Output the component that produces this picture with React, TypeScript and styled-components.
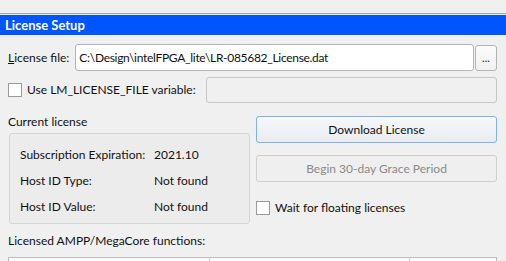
import styled, { createGlobalStyle } from 'styled-components';

const GlobalStyle = createGlobalStyle`
  html, body {
    margin: 0;
    padding: 0;
    background: #f0f0f0;
  }
  body {
    font-family: Lato, "Noto Sans", sans-serif;
    font-size: 12px;
    color: #111;
    overflow: hidden;
  }
`;

const Page = styled.div`
  width: 506px;
  height: 261px;
  padding-top: 13px;
  box-sizing: border-box;
  overflow: hidden;
`;

const Rule = styled.div`
  height: 1px;
  background: #a4a4a4;
`;

const TitleBar = styled.div`
  margin-top: 1px;
  height: 20px;
  background: #0055ff;
  color: #fff;
  font-weight: bold;
  font-size: 13px;
  line-height: 20px;
  padding-left: 5px;
`;

const Body = styled.div`
  padding: 9px 9px 0 8px;
`;

const Row = styled.div<{ $mt?: number }>`
  display: flex;
  align-items: center;
  margin-top: ${(p) => p.$mt ?? 0}px;
`;

const Label = styled.label`
  flex: none;
  white-space: nowrap;
  line-height: 16px;
`;

const Input = styled.div<{ $disabled?: boolean }>`
  box-sizing: border-box;
  height: ${(p) => (p.$disabled ? 26 : 27)}px;
  border: 1px solid ${(p) => (p.$disabled ? '#c6c6c6' : '#b4b4b4')};
  border-radius: 3px;
  background: ${(p) => (p.$disabled ? '#f0f0f0' : '#ffffff')};
  padding-left: 3px;
  line-height: 25px;
  white-space: nowrap;
  overflow: hidden;
`;

const FileInput = styled(Input)`
  flex: 1;
  margin-left: 6px;
  letter-spacing: -0.3px;
`;

const VarInput = styled(Input)`
  width: 291px;
  margin-left: auto;
`;

const Browse = styled.button`
  box-sizing: border-box;
  width: 22px;
  height: 26px;
  margin-left: 1px;
  padding: 0 0 7px;
  border: 1px solid #b4b4b4;
  border-radius: 3px;
  background: linear-gradient(#fbfbfb, #f1f1f1);
  font: inherit;
  font-size: 11px;
  line-height: 1;
  color: #222;
  display: flex;
  align-items: flex-end;
  justify-content: center;
`;

const Check = styled.span`
  display: inline-block;
  box-sizing: border-box;
  width: 14px;
  height: 14px;
  border: 1px solid #9a9a9a;
  background: #fff;
  margin-right: 5px;
  flex: none;
`;

const Columns = styled.div`
  display: grid;
  grid-template-columns: 242px 241px;
  column-gap: 6px;
  margin-top: 11px;
`;

const Column = styled.div`
  display: flex;
  flex-direction: column;
`;

const Caption = styled.div`
  line-height: 16px;
`;

const Group = styled.div`
  margin-top: 3px;
  margin-left: 1px;
  box-sizing: border-box;
  height: 91px;
  border: 1px solid #d4d4d4;
  border-radius: 3px;
  background: #ececec;
  padding: 7px 0 0 10px;
  display: grid;
  grid-template-columns: 134px 1fr;
  grid-auto-rows: 26px;
  align-items: center;
  white-space: nowrap;
`;

const Button = styled.button<{ $primary?: boolean; $mt: number }>`
  box-sizing: border-box;
  height: 27px;
  margin-top: ${(p) => p.$mt}px;
  border: 1px solid ${(p) => (p.$primary ? '#7db4ec' : '#cfcfcf')};
  border-radius: 3px;
  background: ${(p) =>
    p.$primary ? 'linear-gradient(#f6f8fb, #e8ecf1)' : '#efefef'};
  color: ${(p) => (p.$primary ? '#111' : '#8a8a8a')};
  font: inherit;
  padding: 0;
`;

const CheckRow = styled.div`
  display: flex;
  align-items: center;
  margin-top: 18px;
  line-height: 16px;
`;

const Functions = styled.div`
  margin-top: 9px;
  line-height: 16px;
`;

const Table = styled.div`
  margin-top: 8px;
  height: 60px;
  border: 1px solid #bdbdbd;
  background: #fafafa;
  display: grid;
  grid-template-columns: 200px 200px 1fr;
`;

const Cell = styled.div`
  border-left: 1px solid #d2d2d2;
  &:first-child {
    border-left: none;
  }
`;

const Under = styled.span`
  text-decoration: underline;
`;

export default function App() {
  return (
    <Page>
      <GlobalStyle />
      <Rule />
      <TitleBar>License Setup</TitleBar>
      <Body>
        <Row>
          <Label>
            <Under>L</Under>icense file:
          </Label>
          <FileInput>C:\Design\intelFPGA_lite\LR-085682_License.dat</FileInput>
          <Browse>...</Browse>
        </Row>
        <Row $mt={6}>
          <Check />
          <Label>Use LM_LICENSE_FILE variable:</Label>
          <VarInput $disabled />
        </Row>
        <Columns>
          <Column>
            <Caption>Current license</Caption>
            <Group>
              <span>Subscription Expiration:</span>
              <span>2021.10</span>
              <span>Host ID Type:</span>
              <span>Not found</span>
              <span>Host ID Value:</span>
              <span>Not found</span>
            </Group>
          </Column>
          <Column>
            <Button $primary $mt={2}>Download License</Button>
            <Button $mt={12}>Begin 30-day Grace Period</Button>
            <CheckRow>
              <Check />
              <span>Wait for floating licenses</span>
            </CheckRow>
          </Column>
        </Columns>
        <Functions>Licensed AMPP/MegaCore functions:</Functions>
        <Table>
          <Cell />
          <Cell />
          <Cell />
        </Table>
      </Body>
    </Page>
  );
}
